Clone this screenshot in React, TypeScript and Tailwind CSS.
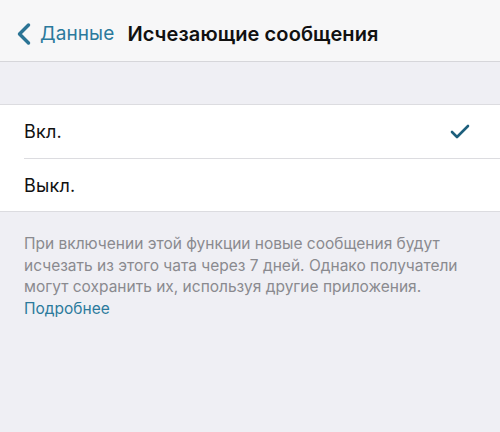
import { Check, ChevronLeft } from "lucide-react";

export default function App() {
    return (
        <div className="w-[500px] h-[432px] bg-[#efeff4] flex flex-col font-['Inter','Noto_Sans',sans-serif]">
            {/* nav bar */}
            <div className="h-[62px] bg-[#f7f7f8] border-b border-[#d6d6da] flex items-center pl-[6px] pt-[7px]">
                <ChevronLeft size={36} strokeWidth={2.3} className="text-[#2b7495]" />
                <span className="text-[19px] text-[#2b7a9c] -ml-[2px] tracking-[0.1px]">Данные</span>
                <span className="text-[20px] font-semibold text-[#111] ml-[13px] tracking-[0.1px]">Исчезающие сообщения</span>
            </div>
            {/* options */}
            <div className="mt-[42px] bg-white border-y border-[#dcdce0] flex flex-col">
                <div className="h-[53px] flex items-center justify-between pl-[24px] pr-[28px]">
                    <span className="text-[18px] text-[#111] tracking-[0.2px]">Вкл.</span>
                    <Check size={24} strokeWidth={2.6} className="text-[#1d5f7c]" />
                </div>
                <div className="ml-[24px] h-px bg-[#dcdce0]" />
                <div className="h-[52px] flex items-center pl-[24px]">
                    <span className="text-[18px] text-[#111] tracking-[0.2px]">Выкл.</span>
                </div>
            </div>
            {/* footer */}
            <div className="pl-[24px] pr-[20px] pt-[21px] text-[15.5px] leading-[21.5px] text-[#8a8a8f]">
                <p>
                    При включении этой функции новые сообщения будут исчезать из этого чата через 7 дней. Однако получатели могут сохранить их, используя другие приложения.
                </p>
                <p className="text-[#2b7a9c]">Подробнее</p>
            </div>
        </div>
    );
}
